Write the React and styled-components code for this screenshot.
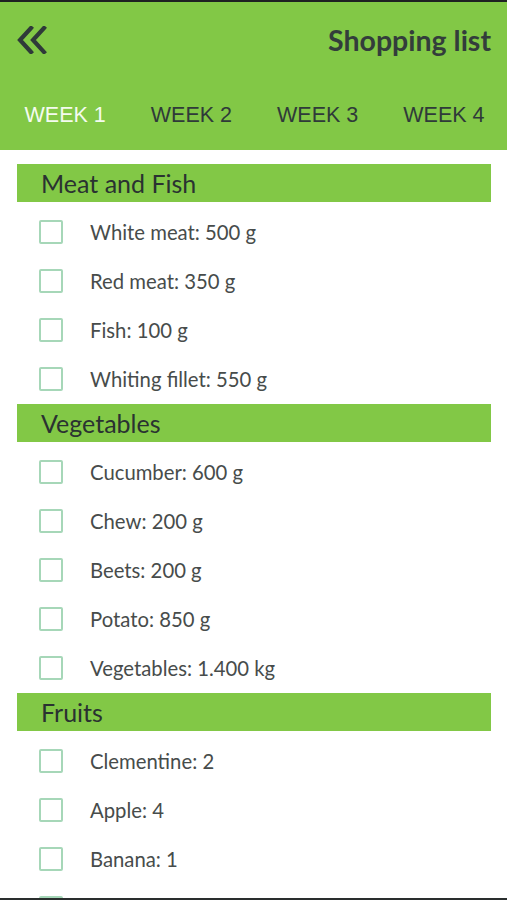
import styled, { createGlobalStyle } from 'styled-components'

const sections = [
  {
    title: 'Meat and Fish',
    items: ['White meat: 500 g', 'Red meat: 350 g', 'Fish: 100 g', 'Whiting fillet: 550 g'],
  },
  {
    title: 'Vegetables',
    items: ['Cucumber: 600 g', 'Chew: 200 g', 'Beets: 200 g', 'Potato: 850 g', 'Vegetables: 1.400 kg'],
  },
  {
    title: 'Fruits',
    // last row only peeks in at the bottom edge
    items: ['Clementine: 2', 'Apple: 4', 'Banana: 1', ''],
  },
]

const weeks = ['Week 1', 'Week 2', 'Week 3', 'Week 4']

function App() {
  return (
    <>
      <GlobalStyle />
      <Screen>
        <Header>
          <TopBar>
            <BackButton aria-label="Back">
              <svg width="30" height="28" viewBox="0 0 30 28" fill="none">
                <path
                  d="M14 2 L3 14 L14 26 M27 2 L16 14 L27 26"
                  stroke="#2f3a39"
                  strokeWidth="4.2"
                  strokeLinecap="square"
                />
              </svg>
            </BackButton>
            <Title>Shopping list</Title>
          </TopBar>
          <Tabs>
            {weeks.map((w, i) => (
              <Tab key={w} active={i === 0}>
                {w}
              </Tab>
            ))}
          </Tabs>
        </Header>
        <List>
          {sections.map((s) => (
            <Section key={s.title}>
              <SectionTitle>{s.title}</SectionTitle>
              <Items>
                {s.items.map((item, i) => (
                  <Row key={i}>
                    <Box />
                    {item && <Label>{item}</Label>}
                  </Row>
                ))}
              </Items>
            </Section>
          ))}
        </List>
      </Screen>
    </>
  )
}

export default App

const GlobalStyle = createGlobalStyle`
  html, body {
    margin: 0;
    padding: 0;
    background: #fff;
  }
`

const Screen = styled.div`
  width: 507px;
  height: 900px;
  box-sizing: border-box;
  border-top: 2px solid #1e2222;
  border-bottom: 2px solid #2a2e2e;
  overflow: hidden;
  background: #fff;
  font-family: Lato, 'Noto Sans', sans-serif;
`

const Header = styled.header`
  background: #82c846;
  height: 148px;
  display: flex;
  flex-direction: column;
`

const TopBar = styled.div`
  height: 78px;
  display: flex;
  align-items: center;
  justify-content: space-between;
  padding: 0 16px 0 17px;
`

const BackButton = styled.div`
  display: flex;
  align-items: center;
  margin-top: -2px;
`

const Title = styled.h1`
  margin: -2px 0 0;
  font-size: 28.5px;
  font-weight: 700;
  color: #333d3b;
`

const Tabs = styled.nav`
  flex: 1;
  display: grid;
  grid-template-columns: repeat(4, 1fr);
  align-items: center;
  padding: 0 0 0 2px;
`

const Tab = styled.div`
  text-align: center;
  text-transform: uppercase;
  font-family: 'Liberation Sans', Arial, sans-serif;
  font-size: 21.5px;
  color: ${(p) => (p.active ? '#f4fbef' : '#2f3a39')};
`

const List = styled.div`
  padding: 14px 16px 0 17px;
`

const Section = styled.section`
  & + & {
    margin-top: 1px;
  }
`

const SectionTitle = styled.h2`
  margin: 0;
  height: 38px;
  display: flex;
  align-items: center;
  padding-left: 24px;
  background: #82c846;
  font-size: 25px;
  font-weight: 400;
  color: #2a3231;
`

const Items = styled.div`
  padding-top: 5px;
`

const Row = styled.div`
  height: 49px;
  display: flex;
  align-items: center;
  padding-left: 22px;
`

const Box = styled.span`
  width: 20px;
  height: 20px;
  border: 2px solid #a6d7b8;
  border-radius: 2px;
  flex-shrink: 0;
`

const Label = styled.span`
  margin-left: 27px;
  font-size: 20.3px;
  color: #474c4b;
`
